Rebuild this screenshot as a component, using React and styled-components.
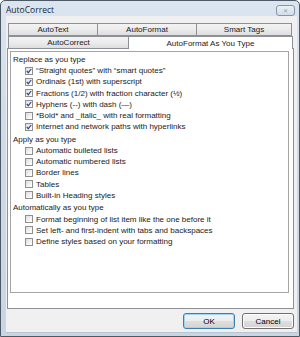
import React from "react"
import styled, { createGlobalStyle } from "styled-components"

const GlobalStyle = createGlobalStyle`
  html, body {
    margin: 0;
    padding: 0;
    width: 300px;
    height: 337px;
    overflow: hidden;
    background: #ffffff;
  }
  * {
    box-sizing: border-box;
  }
`

const sections = [
  {
    title: "Replace as you type",
    items: [
      { label: "\u201CStraight quotes\u201D with \u201Csmart quotes\u201D", checked: true },
      { label: "Ordinals (1st) with superscript", checked: true },
      { label: "Fractions (1/2) with fraction character (\u00BD)", checked: true },
      { label: "Hyphens (--) with dash (\u2014)", checked: true },
      { label: "*Bold* and _italic_ with real formatting", checked: false },
      { label: "Internet and network paths with hyperlinks", checked: true },
    ],
  },
  {
    title: "Apply as you type",
    items: [
      { label: "Automatic bulleted lists" },
      { label: "Automatic numbered lists" },
      { label: "Border lines" },
      { label: "Tables" },
      { label: "Built-in Heading styles" },
    ],
  },
  {
    title: "Automatically as you type",
    items: [
      { label: "Format beginning of list item like the one before it" },
      { label: "Set left- and first-indent with tabs and backspaces" },
      { label: "Define styles based on your formatting" },
    ],
  },
]

const backTabs = [
  { label: "AutoText", width: 90 },
  { label: "AutoFormat", width: 100 },
  { label: "Smart Tags", width: 96 },
]

const frontTabs = [
  { label: "AutoCorrect", width: 121 },
  { label: "AutoFormat As You Type", width: 165, active: true },
]

const CheckMark = () => (
  <svg width="6" height="6" viewBox="0 0 6 6">
    <path d="M0.8 3 L2.3 4.7 L5.2 1" fill="none" stroke="#324a8c" strokeWidth="1.2" />
  </svg>
)

const App = () => {
  return (
    <>
      <GlobalStyle />
      <Window>
        <TitleBar>
          <Title>AutoCorrect</Title>
          <CloseButton>{"\u2715"}</CloseButton>
        </TitleBar>
        <Client>
          <TabRow>
            {backTabs.map((t) => (
              <Tab key={t.label} $width={t.width}>
                {t.label}
              </Tab>
            ))}
          </TabRow>
          <TabRow>
            {frontTabs.map((t) => (
              <Tab key={t.label} $width={t.width} $active={t.active}>
                {t.label}
              </Tab>
            ))}
          </TabRow>
          <Panel>
            <OptionsBox>
              {sections.map((s, i) => (
                <Section key={s.title}>
                  <SectionTitle $first={i === 0}>{s.title}</SectionTitle>
                  {s.items.map((item) => (
                    <Option key={item.label}>
                      <Box>{item.checked && <CheckMark />}</Box>
                      <OptionLabel>{item.label}</OptionLabel>
                    </Option>
                  ))}
                </Section>
              ))}
            </OptionsBox>
          </Panel>
          <Footer>
            <Button $default>OK</Button>
            <Button>Cancel</Button>
          </Footer>
        </Client>
      </Window>
    </>
  )
}

export default App

const Window = styled.div`
  width: 300px;
  height: 337px;
  display: flex;
  flex-direction: column;
  border: 1px solid #4e5966;
  border-radius: 5px 5px 0 0;
  background: linear-gradient(180deg, #dbe5f0 0%, #cfdbe8 40%, #c9d5e3 100%);
  padding: 0 2px 3px 5px;
  font-family: "Liberation Sans", Arial, sans-serif;
  font-size: 8px;
  color: #1a1a1a;
`

const TitleBar = styled.div`
  height: 14px;
  display: flex;
  align-items: center;
  justify-content: space-between;
`

const Title = styled.div`
  font-family: "Open Sans", "Liberation Sans", sans-serif;
  font-size: 8.5px;
  color: #1b2433;
  margin-top: 2px;
`

const CloseButton = styled.div`
  width: 19px;
  height: 11px;
  margin-top: 5px;
  margin-right: 2px;
  border: 1px solid #8795a8;
  border-radius: 3px;
  background: linear-gradient(180deg, #e9eff6 0%, #d3dde9 100%);
  color: #95a2b4;
  font-size: 6px;
  display: flex;
  align-items: center;
  justify-content: center;
  line-height: 1;
`

const Client = styled.div`
  flex: 1;
  margin-top: 1px;
  background: #f0f0f0;
  display: flex;
  flex-direction: column;
  padding: 7px 3px 3px 1px;
  border-bottom: 1px solid #b9c4d1;
`

const TabRow = styled.div`
  display: flex;
  padding-left: 1px;
  height: 13px;
`

const Tab = styled.div`
  width: ${(p) => p.$width}px;
  height: 13px;
  display: flex;
  align-items: center;
  justify-content: center;
  border: 1px solid #8d9097;
  border-bottom: ${(p) => (p.$active ? "none" : "1px solid #8d9097")};
  margin-right: ${(p) => (p.$active ? "0" : "-1px")};
  background: ${(p) =>
    p.$active ? "#ffffff" : "linear-gradient(180deg, #f3f3f3 0%, #ebebeb 50%, #dedede 100%)"};
  white-space: nowrap;
  position: relative;
  z-index: ${(p) => (p.$active ? 2 : 1)};
  &:last-child {
    margin-right: 0;
  }
`

const Panel = styled.div`
  flex: 1;
  margin-top: -1px;
  background: #ffffff;
  border: 1px solid #8d9097;
  padding: 2px 4px 15px 2px;
  display: flex;
`

const OptionsBox = styled.div`
  flex: 1;
  border: 1px solid #a5a5a5;
  background: #ffffff;
  padding: 2px 0 0 2px;
`

const Section = styled.div`
  display: flex;
  flex-direction: column;
`

const SectionTitle = styled.div`
  height: 11.2px;
  line-height: 11.2px;
  margin-top: ${(p) => (p.$first ? "0" : "1.5px")};
  white-space: nowrap;
`

const Option = styled.div`
  height: 11.2px;
  display: flex;
  align-items: center;
  padding-left: 12px;
  white-space: nowrap;
`

const Box = styled.span`
  width: 8px;
  height: 8px;
  border: 1px solid #8f8f8f;
  background: linear-gradient(135deg, #dcdcdc 0%, #f4f4f4 60%, #ffffff 100%);
  display: flex;
  align-items: center;
  justify-content: center;
  flex-shrink: 0;
`

const OptionLabel = styled.span`
  margin-left: 3px;
  line-height: 11.2px;
`

const Footer = styled.div`
  display: flex;
  justify-content: flex-end;
  gap: 7px;
  margin-top: 4px;
`

const Button = styled.div`
  width: 52px;
  height: 16px;
  border: 1px solid ${(p) => (p.$default ? "#3c7fb1" : "#707070")};
  border-radius: 3px;
  background: linear-gradient(180deg, #f4f4f4 0%, #ececec 50%, #dfdfdf 51%, #d3d3d3 100%);
  box-shadow: ${(p) => (p.$default ? "inset 0 0 0 1px #9fd5f3" : "inset 0 0 0 1px #fcfcfc")};
  display: flex;
  align-items: center;
  justify-content: center;
  color: #000;
`
